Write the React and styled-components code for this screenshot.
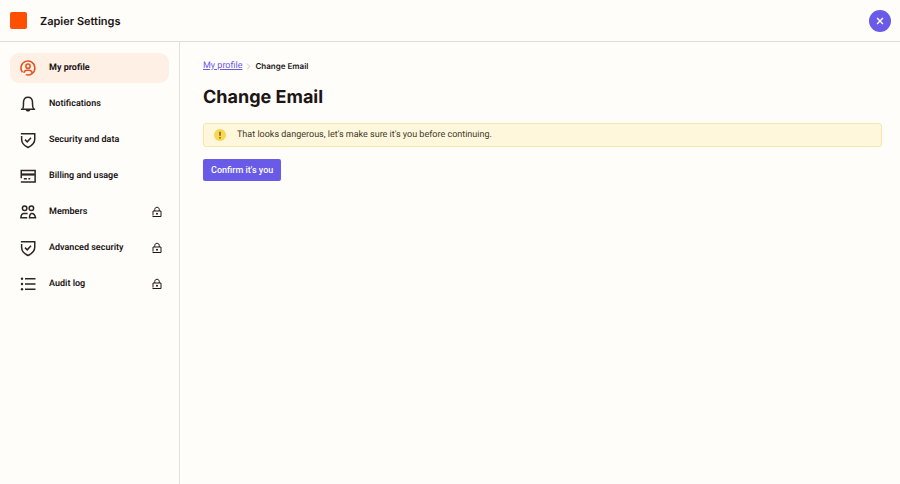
import React from "react";
import styled, { createGlobalStyle } from "styled-components";

const GlobalStyle = createGlobalStyle`
  *, *::before, *::after { box-sizing: border-box; }
  body {
    margin: 0;
    background: #fffdf9;
    color: #201515;
    font-family: Roboto, Inter, sans-serif;
    font-size: 9px;
    line-height: 13px;
    text-rendering: geometricPrecision;
  }
`;

const Page = styled.div`
  min-height: 100vh;
  display: flex;
  flex-direction: column;
`;

const Header = styled.header`
  display: flex;
  align-items: center;
  gap: 13px;
  height: 42px;
  padding: 0 9px 0 10px;
  border-bottom: 1px solid #dfddd9;
`;

const Logo = styled.svg`
  width: 17px;
  height: 17px;
`;

const AppName = styled.div`
  flex: 1;
  font-family: Inter, sans-serif;
  font-size: 11px;
  line-height: 16px;
  font-weight: 600;
`;

const CloseButton = styled.button`
  display: grid;
  place-items: center;
  width: 22px;
  height: 22px;
  padding: 0;
  border: 0;
  border-radius: 50%;
  background: #695be8;
  color: #fffdf9;
  cursor: pointer;
`;

const Body = styled.div`
  flex: 1;
  display: flex;
`;

const Sidebar = styled.nav`
  flex: none;
  width: 180px;
  padding: 11px 10px;
  border-right: 1px solid #e3e1dd;
`;

const NavList = styled.ul`
  display: grid;
  gap: 6px;
  margin: 0;
  padding: 0;
  list-style: none;
`;

const NavLink = styled.a`
  display: flex;
  align-items: center;
  gap: 12px;
  height: 30px;
  padding: 0 6px 0 9px;
  border-radius: 9px;
  background: ${(p) => (p.$active ? "#fff0e5" : "transparent")};
  font-weight: ${(p) => (p.$active ? 700 : 600)};
  color: inherit;
  text-decoration: none;

  > svg:first-child { color: ${(p) => (p.$active ? "#df5320" : "#2d2626")}; }
`;

const NavLabel = styled.span`
  flex: 1;
`;

const Icon = styled.svg`
  flex: none;
  width: ${(p) => p.$size}px;
  height: ${(p) => p.$size}px;
  fill: none;
  stroke: currentColor;
  stroke-width: 2;
`;

const Main = styled.main`
  flex: 1;
  min-width: 0;
  display: flex;
  flex-direction: column;
  align-items: flex-start;
  padding: 18px 18px 18px 23px;
`;

const Breadcrumb = styled.ol`
  display: flex;
  align-items: center;
  gap: 3px;
  margin: 0;
  padding: 0;
  list-style: none;
`;

const Crumb = styled.li`
  display: flex;
  align-items: center;
  gap: 3px;
  font-family: ${(p) => (p.$current ? "Inter, sans-serif" : "inherit")};
  font-size: ${(p) => (p.$current ? 8 : 9)}px;
  font-weight: ${(p) => (p.$current ? 600 : 400)};

  svg { color: #b5b0ad; }
`;

const CrumbLink = styled.a`
  color: #695be8;
  text-decoration: underline;
`;

const Title = styled.h1`
  margin: 12px 0;
  font-family: Inter, sans-serif;
  font-size: 18px;
  line-height: 26px;
  font-weight: 700;
`;

const Alert = styled.div`
  align-self: stretch;
  display: flex;
  align-items: center;
  gap: 11px;
  height: 24px;
  padding: 0 10px;
  border: 1px solid #f5e8a9;
  border-radius: 3px;
  background: #fff7dc;
  color: #403a2c;

  svg { flex: none; width: 12px; height: 12px; }
`;

const PrimaryButton = styled.button`
  height: 22px;
  margin-top: 12px;
  padding: 0 8px;
  border: 0;
  border-radius: 2px;
  background: #695be8;
  color: #fffdf9;
  font: 500 9px/12px Roboto, Inter, sans-serif;
  cursor: pointer;
`;

const shapes = {
  profile: (
    <>
      <path d="M4.500 17.600A9.300 9.300 0 1 1 9 20.800" />
      <circle cx="12" cy="9.500" r="2.800" />
      <path d="M6.500 18.500c.6-2.500 2-3.500 4-3.500h3c2 0 3.400 1 4 3.500" />
    </>
  ),
  bell: (
    <>
      <path d="M2.500 19H21.500M5 18c1.500-2 .8-5 1-8.500C6.200 5.500 8.500 3 12 3s5.800 2.500 6 6.500c.2 3.500-.5 6.500 1.500 9" />
      <path d="M9 20c.5 2.700 5.500 2.700 6 0z" fill="currentColor" stroke="none" />
    </>
  ),
  shield: (
    <>
      <path d="M2.500 3.500H21V11c0 5-3.500 8.500-9 11-5.500-2.500-8.500-6-8.500-11V6.500" />
      <path d="m8 11.500 3 3 5-5.500" />
    </>
  ),
  card: (
    <>
      <path d="M3 15V4.500h18.500V20H2.500" />
      <path d="M3 10h18" strokeWidth="3" />
      <path d="M6.500 15.500h4M12.500 15.500h2.500" />
    </>
  ),
  people: (
    <>
      <circle cx="7.500" cy="7" r="3" />
      <circle cx="16.500" cy="7" r="3" />
      <path d="M11 19.500H2.500c.3-3.500 1.500-5.500 4-5.500H11.500M23 19.500H14c.2-3.500 1-5.500 3-5.500 3.500 0 4.500 2 5 6" />
    </>
  ),
  list: (
    <>
      <path d="M8 5h14M8 12h14M8 19h14" />
      <g fill="currentColor" stroke="none">
        <circle cx="4" cy="5" r="1.600" />
        <circle cx="4" cy="12" r="1.600" />
        <circle cx="4" cy="19" r="1.600" />
      </g>
    </>
  ),
  lock: (
    <>
      <path d="M4 19V10h16v11H3" />
      <path d="M7.500 10V7.500C7.500 4.500 9 2.500 12 2.500s4.500 2 4.500 5V10" />
      <circle cx="12" cy="15.500" r="2" fill="currentColor" stroke="none" />
    </>
  ),
  close: <path d="m5 5 14 14M19 5 5 19" strokeWidth="3.500" />,
  chevron: <path d="m7 2 9 10-9 10" strokeWidth="2.500" />,
};

const Glyph = ({ name, size = 18 }) => (
  <Icon viewBox="0 0 24 24" $size={size} aria-hidden="true">
    {shapes[name]}
  </Icon>
);

const items = [
  { label: "My profile", icon: "profile", active: true },
  { label: "Notifications", icon: "bell" },
  { label: "Security and data", icon: "shield" },
  { label: "Billing and usage", icon: "card" },
  { label: "Members", icon: "people", locked: true },
  { label: "Advanced security", icon: "shield", locked: true },
  { label: "Audit log", icon: "list", locked: true },
];

export default function App() {
  return (
    <>
      <GlobalStyle />
      <Page>
        <Header>
          <Logo viewBox="0 0 17 17" aria-hidden="true">
            <rect width="17" height="17" rx="2" fill="#ff4f00" />
          </Logo>
          <AppName>Zapier Settings</AppName>
          <CloseButton type="button" aria-label="Close settings">
            <Glyph name="close" size={10} />
          </CloseButton>
        </Header>
        <Body>
          <Sidebar aria-label="Settings">
            <NavList>
              {items.map(({ label, icon, active, locked }) => (
                <li key={label}>
                  <NavLink href="#" $active={active} aria-current={active ? "page" : undefined}>
                    <Glyph name={icon} />
                    <NavLabel>{label}</NavLabel>
                    {locked && <Glyph name="lock" size={12} />}
                  </NavLink>
                </li>
              ))}
            </NavList>
          </Sidebar>
          <Main>
            <nav aria-label="Breadcrumb">
              <Breadcrumb>
                <Crumb>
                  <CrumbLink href="#">My profile</CrumbLink>
                  <Glyph name="chevron" size={7} />
                </Crumb>
                <Crumb $current aria-current="page">Change Email</Crumb>
              </Breadcrumb>
            </nav>
            <Title>Change Email</Title>
            <Alert role="status">
              <svg viewBox="0 0 24 24" aria-hidden="true">
                <circle cx="12" cy="12" r="12" fill="#f9d654" />
                <path d="M12 5.500v8M12 16v3" stroke="#5b4515" strokeWidth="2.500" />
              </svg>
              <span>That looks dangerous, let's make sure it's you before continuing.</span>
            </Alert>
            <PrimaryButton type="button">Confirm it's you</PrimaryButton>
          </Main>
        </Body>
      </Page>
    </>
  );
}
